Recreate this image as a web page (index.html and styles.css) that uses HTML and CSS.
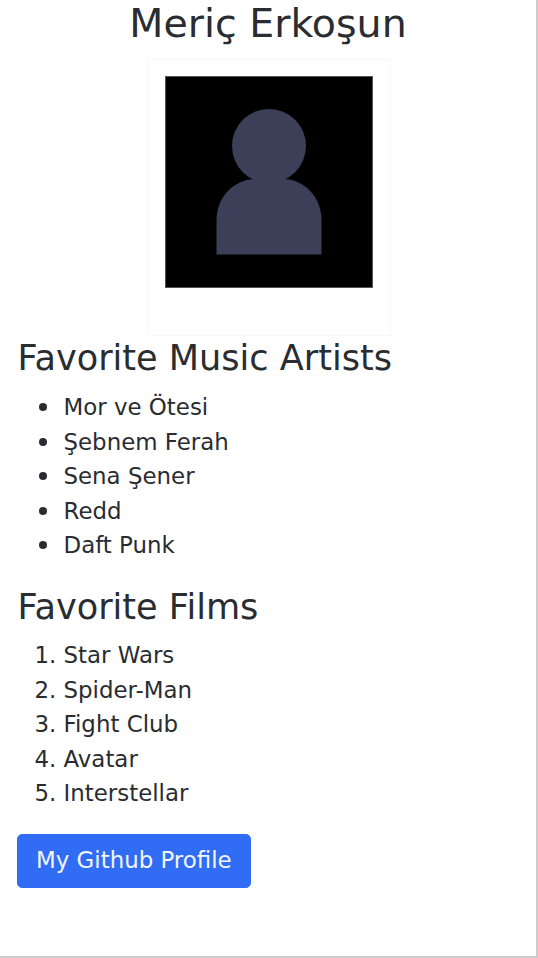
FILE: index.html
```html
<!DOCTYPE html>
<html lang="en">
<head>
<meta charset="utf-8">
<title>Meriç Erkoşun</title>
<link rel="stylesheet" href="styles.css">
</head>
<body>
<main class="page">
  <h1 class="name">Meriç Erkoşun</h1>
  <div class="photo">
    <svg class="avatar" viewBox="0 0 208 212" role="img" aria-label="Avatar">
      <rect x="0.5" y="0.5" width="207" height="211" fill="#000" stroke="#555"/>
      <circle cx="104" cy="70" r="37" fill="#3c3f58"/>
      <path d="M51.5 178.5V144C51.5 121 69 103 91 103H118C139 103 156.500 121 156.500 144V178.500Z" fill="#3c3f58"/>
    </svg>
  </div>
  <h2 class="heading">Favorite Music Artists</h2>
  <ul class="list bullets">
    <li>Mor ve Ötesi</li>
    <li>Şebnem Ferah</li>
    <li>Sena Şener</li>
    <li>Redd</li>
    <li>Daft Punk</li>
  </ul>
  <h2 class="heading">Favorite Films</h2>
  <ol class="list">
    <li>Star Wars</li>
    <li>Spider-Man</li>
    <li>Fight Club</li>
    <li>Avatar</li>
    <li>Interstellar</li>
  </ol>
  <a class="button" href="#">My Github Profile</a>
</main>
</body>
</html>
```
FILE: styles.css
```css
* { box-sizing: border-box; }
body {
  margin: 0;
  background: #fff;
  color: #292c30;
  font: 22.9px/34.5px "DejaVu Sans", sans-serif;
}
.page {
  height: 958px;
  padding: 0 17.5px;
  border-right: 2px solid #ccc;
  border-bottom: 2px solid #ccc;
  overflow: hidden;
}
.name {
  margin: 0 0 12px;
  font-size: 39.5px;
  line-height: 47px;
  font-weight: 400;
  text-align: center;
}
.photo {
  width: 243px;
  height: 277px;
  margin: 0 auto 0 130.5px;
  padding: 16px;
  border: 1px solid #f7f7f7;
}
.avatar { display: block; width: 208px; height: 212px; }
.heading {
  margin: 0 0 10px;
  padding-top: 1px;
  font-size: 35.1px;
  line-height: 42px;
  font-weight: 400;
}
.list { margin: 0 0 23.5px; padding-left: 46px; }
.bullets { margin: 11px 0 22.5px; list-style: none; }
.bullets li::before {
  content: "";
  display: inline-block;
  width: 8px;
  height: 8px;
  margin: 0 17px 0 -25px;
  border-radius: 50%;
  background: currentColor;
  vertical-align: 4px;
}
.button {
  display: inline-block;
  margin-left: -0.5px;
  padding: 8px 18px 9px;
  border: 1px solid #316cf4;
  border-radius: 5px;
  background: #316cf4;
  color: #f1f6ff;
  line-height: 35px;
  text-decoration: none;
}
```
